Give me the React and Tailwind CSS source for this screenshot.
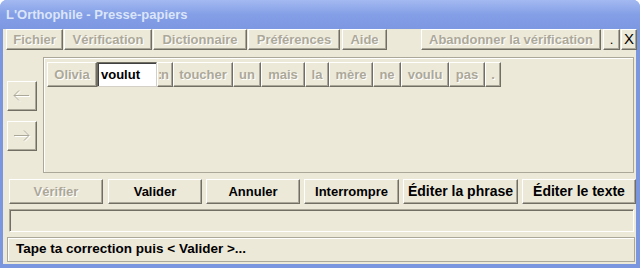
const raised =
  'border border-t-white border-l-white border-r-[#716f64] border-b-[#716f64] shadow-[inset_-1px_-1px_0_#aca899] bg-[#ece9d8]';
const off = 'text-[#aca899] [text-shadow:1px_1px_0_#ffffff]';

function Btn({ w, h = 'h-[21px]', dim, className = '', children }) {
  return (
    <div
      className={`${raised} ${h} ${dim ? off : 'text-black'} flex items-center justify-center shrink-0 whitespace-nowrap ${className}`}
      style={{ width: w }}
    >
      {children}
    </div>
  );
}

const words = [
  ['toucher', 60],
  ['un', 28],
  ['mais', 44],
  ['la', 24],
  ['mère', 44],
  ['ne', 28],
  ['voulu', 48],
  ['pas', 36],
  ['.', 16],
];

function ArrowShape({ dir }) {
  return dir === 'left' ? (
    <>
      <polyline points="6,0.5 1,5.5 6,10.5" />
      <line x1="1" y1="5.5" x2="16" y2="5.5" />
    </>
  ) : (
    <>
      <polyline points="11,0.5 16,5.5 11,10.5" />
      <line x1="1" y1="5.5" x2="16" y2="5.5" />
    </>
  );
}

function Arrow({ dir }) {
  return (
    <div className={`${raised} w-[30px] h-[30px] flex items-center justify-center`}>
      <svg width="19" height="13" viewBox="0 0 19 13">
        <g stroke="#ffffff" strokeWidth="1" fill="none" transform="translate(1 1)">
          <ArrowShape dir={dir} />
        </g>
        <g stroke="#aca899" strokeWidth="1" fill="none">
          <ArrowShape dir={dir} />
        </g>
      </svg>
    </div>
  );
}

export default function App() {
  return (
    <div className="w-[640px] h-[268px] bg-[#7a96df] rounded-t-[7px] overflow-hidden flex flex-col font-['Liberation_Sans',Arial,sans-serif] text-[13px] font-bold select-none">
      <div className="h-[29px] shrink-0 flex items-center pl-[6px] bg-gradient-to-b from-[#a3b9f1] via-[#849fe6] to-[#7d98e2] text-[#dbe5f9] text-[13px]">
        L'Orthophile - Presse-papiers
      </div>

      <div className="mx-[3px] mr-[4px] h-[235px] bg-[#ece9d8] flex flex-col">
        <div className="flex items-start">
          <div className="flex gap-[1px] ml-[3px]">
            <Btn w={57} dim>Fichier</Btn>
            <Btn w={88} dim>Vérification</Btn>
            <Btn w={94} dim>Dictionnaire</Btn>
            <Btn w={92} dim>Préférences</Btn>
            <Btn w={45} dim className="ml-[1px]">Aide</Btn>
          </div>
          <div className="flex ml-auto mr-[-1px]">
            <Btn w={180} dim>Abandonner la vérification</Btn>
            <Btn w={17} className="ml-[2px]">
              <span className="font-normal">.</span>
            </Btn>
            <Btn w={16} className="ml-[1px] text-[15px] font-normal">X</Btn>
          </div>
        </div>

        <div className="flex mt-[7px] h-[116px]">
          <div className="flex flex-col gap-[10px] ml-[4px] pt-[24px]">
            <Arrow dir="left" />
            <Arrow dir="right" />
          </div>
          <div className="ml-[6px] w-[591px] border border-[#aca899] shadow-[inset_1px_1px_0_#ffffff] pt-[4px] pl-[3px]">
            <div className="flex">
              <Btn w={50} h="h-[25px]" dim>Olivia</Btn>
              <div className="w-[60px] h-[25px] shrink-0 bg-white border-t border-l border-t-[#716f64] border-l-[#716f64] border-b border-r border-b-[#d4d0c8] border-r-[#d4d0c8] shadow-[inset_1px_1px_0_#404040] text-black pl-[3px] flex items-center">
                voulut
              </div>
              <Btn w={16} h="h-[25px]" dim className="overflow-hidden !justify-end pr-[3px]">
                <span className="inline-block w-[4px] overflow-hidden text-right">:</span>n
              </Btn>
              {words.map(([t, w]) => (
                <Btn key={t} w={w} h="h-[25px]" dim>
                  {t}
                </Btn>
              ))}
            </div>
          </div>
        </div>

        <div className="flex gap-[4px] ml-[6px] mt-[6px]">
          <Btn w={94} h="h-[25px]" dim>Vérifier</Btn>
          <Btn w={94} h="h-[25px]" className="ml-[1px]">Valider</Btn>
          <Btn w={94} h="h-[25px]">Annuler</Btn>
          <Btn w={95} h="h-[25px]">Interrompre</Btn>
          <Btn w={115} h="h-[25px]" className="text-[14px]">Éditer la phrase</Btn>
          <Btn w={114} h="h-[25px]" className="text-[14px]">Éditer le texte</Btn>
        </div>

        <div className="ml-[6px] mt-[5px] w-[625px] h-[23px] border border-t-[#aca899] border-l-[#aca899] border-b-white border-r-white shadow-[inset_1px_1px_0_#716f64]" />

        <div className="ml-[4px] mt-[5px] w-[628px] h-[25px] border border-[#aca899] shadow-[inset_1px_1px_0_#ffffff] flex items-center pl-[8px] text-black text-[13.5px]">
          Tape ta correction puis &lt; Valider &gt;...
        </div>
      </div>
    </div>
  );
}
